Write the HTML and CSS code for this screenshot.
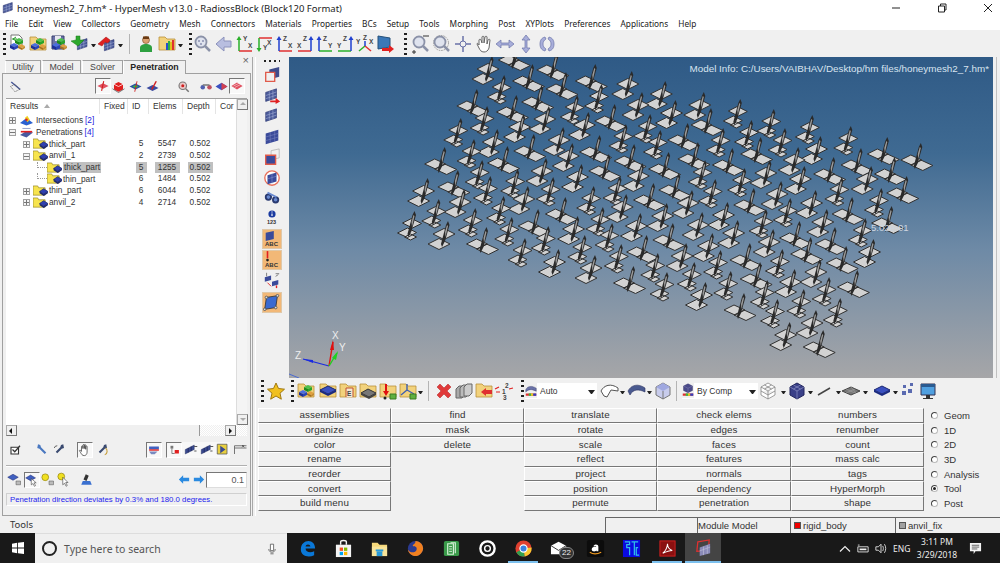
FILE: index.html
```html
<!DOCTYPE html>
<html lang="en">
<head>
<meta charset="utf-8">
<title>HyperMesh</title>
<link rel="stylesheet" href="styles.css">
</head>
<body>
<svg class="defs" aria-hidden="true">
  <defs>
    <g id="blocks"><path d="M8 6l4-2 4 2-4 2z" fill="#4cc04c"/><path d="M8 6v3l4 2V8z" fill="#1d8a1d"/><path d="M16 6v3l-4 2V8z" fill="#2aa52a"/><path d="M3 11l4-2 4 2-4 2z" fill="#4a6ee0"/><path d="M3 11v3l4 2v-3z" fill="#1b2f9a"/><path d="M11 11v3l-4 2v-3z" fill="#2a44b8"/><path d="M11 12l3-2 4 2-3 2z" fill="#e0a040"/><path d="M11 12v2l4 2v-2z" fill="#a8701e"/><path d="M18 12v2l-3 2v-2z" fill="#c48a30"/></g>
    <path id="folder" d="M2 5V3h6l2 2h8v11H2z" fill="#f2d27c" stroke="#b98f3a" stroke-width=".8"/>
    <g id="mesh"><path d="M3 6l12-4v10L3 16z" fill="#4a5a9a" stroke="#2a3470" stroke-width=".7"/><path d="M7 4.800v10M11 3.500v10M3 9.500l12-4M3 13l12-4" stroke="#aab4da" stroke-width=".6" fill="none"/></g>
    <g id="tfold"><path d="M0 3V1h5l1 2h7v8H0z" fill="#f7e44e" stroke="#8f8120" stroke-width=".7"/><path d="M7 7l4.500-3 4.500 3-4.500 3z" fill="#3040b0" stroke="#101a60" stroke-width=".7"/><path d="M7 7v2l4.500 3 4.500-3V7l-4.500 3z" fill="#1a2570"/></g>
    <g id="diam"><path d="M2 9l8-4 8 4-8 4z" fill="#3a50c0" stroke="#1a2670"/><path d="M2 9v2l8 4 8-4V9l-8 4z" fill="#1a2a80"/></g>
    <g id="mag"><circle cx="8" cy="8" r="5.500" fill="#dfe3ee" stroke="#8b92a8" stroke-width="1.800"/><path d="M12 12l5 5" stroke="#8b92a8" stroke-width="2.500"/></g>
    <g id="blade"><path d="M0 6L5 -13L7 -17L8.500 -13L4 3L1 9z" fill="#2a2a2a"/><path d="M4 -6L6 -13L7 -12L4.500 -1z" fill="#9c9c9c"/></g>
    <g id="item0"><path d="M-8 -4l11-5.500 11 5.500-11 5.500z M-13 6l11-5.500 11 5.500-11 5.500z" fill="#d2d2d2" stroke="#303030"/><use href="#blade"/></g>
    <g id="item1"><path d="M-13 0l10-5 11 5-10 5z M-3 5l10-5 12 5.500-10 5z" fill="#d2d2d2" stroke="#303030"/><use href="#blade"/></g>
    <g id="item2"><path d="M-5 -5l9-4.500 10 5-9 4.500z M-10 5l10-5 9 4.500 -9 5z M-3 9l6-3 6 3-6 3z" fill="#d2d2d2" stroke="#303030"/><use href="#blade"/></g>
  </defs>
</svg>

<div class="titlebar">
  <svg class="appicon" viewBox="0 0 20 20"><use href="#mesh"/></svg>
  <span class="title">honeymesh2_7.hm* - HyperMesh v13.0 - RadiossBlock (Block120 Format)</span>
  <div class="winctl">
    <svg viewBox="0 0 10 10"><path d="M1 5h8" stroke="#222"/></svg>
    <svg viewBox="0 0 10 10"><path d="M1.500 3h6v6h-6zM3.500 3V1h5.500v6H7.500" fill="none" stroke="#222"/></svg>
    <svg viewBox="0 0 10 10"><path d="M1 1l8 8M9 1l-8 8" stroke="#222"/></svg>
  </div>
</div>

<nav class="menubar">
  <span>File</span><span>Edit</span><span>View</span><span>Collectors</span><span>Geometry</span><span>Mesh</span><span>Connectors</span><span>Materials</span><span>Properties</span><span>BCs</span><span>Setup</span><span>Tools</span><span>Morphing</span><span>Post</span><span>XYPlots</span><span>Preferences</span><span>Applications</span><span>Help</span>
</nav>

<div class="toolbar top">
  <i class="dots"></i>
  <svg class="ic" viewBox="0 0 20 20"><path d="M4 1h8l3 3v8H4z" fill="#fff" stroke="#777"/><path d="M5 5h5M9 3l-3 2 3 2" stroke="#2a9a2a" fill="none"/><use href="#blocks"/></svg>
  <svg class="ic" viewBox="0 0 20 20"><use href="#folder"/><use href="#blocks"/></svg>
  <svg class="ic" viewBox="0 0 20 20"><path d="M3 2h12v13H3z" fill="#6a72a8" stroke="#3a4070"/><path d="M6 2h6v5H6z" fill="#e8e8f0"/><use href="#blocks"/></svg>
  <svg class="ic" viewBox="0 0 20 20"><g transform="translate(5 3) scale(.8)"><use href="#mesh"/></g><path d="M10 2v4h4L8 12 1 7l5-1V2z" fill="#2da82d" stroke="#1a7a1a" stroke-width=".5"/></svg>
  <b class="drop"></b>
  <svg class="ic" viewBox="0 0 20 20"><g transform="translate(5 4) scale(.8)"><use href="#mesh"/></g><path d="M1 10l8-7 4 3-1 2-2 1-2-1-3 4z" fill="#e02020" stroke="#a01010" stroke-width=".5"/></svg>
  <b class="drop"></b>
  <i class="sep"></i>
  <svg class="ic" viewBox="0 0 20 20"><circle cx="10" cy="6" r="3.500" fill="#d9a070" stroke="#7a4a20" stroke-width=".6"/><path d="M7 2.500h6V5H7z" fill="#6a3a12"/><path d="M4 18v-4c0-3 3-4 6-4s6 1 6 4v4z" fill="#2da040"/></svg>
  <svg class="ic" viewBox="0 0 20 20"><use href="#folder"/><path d="M9 16V9h2v7z" fill="#2a50d0"/><path d="M11 16V7h2v9z" fill="#30b040"/><path d="M13 16V8h2v8z" fill="#e0c020"/><path d="M15 16V6h2v10z" fill="#e03030"/></svg>
  <b class="drop"></b>
  <i class="dots ml5"></i>
  <svg class="ic" viewBox="0 0 20 20"><use href="#mag"/><g fill="#8a90b0"><circle cx="6" cy="7" r="1"/><circle cx="10" cy="7" r="1"/><circle cx="8" cy="10" r="1"/></g></svg>
  <svg class="ic" viewBox="0 0 20 20"><path d="M2 10l8-7v4h7v6h-7v4z" fill="#b8bee0" stroke="#8c92bc"/></svg>
  <div class="tgroup">
    <svg class="ic" viewBox="0 0 20 20"><path d="M4 17h13" stroke-width="1.500" fill="none" stroke="#e03030"/><path d="M4 17V4" stroke="#2ab02a" stroke-width="1.500"/><path d="M1.500 6L4 2l2.500 4z" fill="#2ab02a"/><text x="8" y="7" class="ax">Y</text><text x="13" y="14" class="ax">X</text></svg>
    <svg class="ic" viewBox="0 0 20 20"><path d="M4 4h13" stroke="#e03030" stroke-width="1.500"/><path d="M4 4v12" stroke="#2ab02a" stroke-width="1.500"/><path d="M1.500 14L4 18l2.500-4z" fill="#2ab02a"/><text x="8" y="16" class="ax">Y</text><text x="12" y="11" class="ax">X</text></svg>
    <svg class="ic" viewBox="0 0 20 20"><path d="M4 17h13" stroke="#e03030" stroke-width="1.500"/><path d="M4 17V4" stroke="#2040d0" stroke-width="1.500"/><path d="M1.500 6L4 2l2.500 4z" fill="#2040d0"/><text x="8" y="7" class="ax">Z</text><text x="13" y="14" class="ax">X</text></svg>
    <svg class="ic" viewBox="0 0 20 20"><path d="M3 17h13" stroke="#e03030" stroke-width="1.500"/><path d="M16 17V4" stroke="#2040d0" stroke-width="1.500"/><path d="M13.500 6L16 2l2.500 4z" fill="#2040d0"/><text x="8" y="7" class="ax">Z</text><text x="2" y="14" class="ax">X</text></svg>
    <svg class="ic" viewBox="0 0 20 20"><path d="M4 17h13" stroke="#2ab02a" stroke-width="1.500"/><path d="M4 17V4" stroke="#2040d0" stroke-width="1.500"/><path d="M1.500 6L4 2l2.500 4z" fill="#2040d0"/><text x="8" y="7" class="ax">Z</text><text x="13" y="14" class="ax">Y</text></svg>
    <svg class="ic" viewBox="0 0 20 20"><path d="M3 17h13" stroke="#2ab02a" stroke-width="1.500"/><path d="M16 17V4" stroke="#2040d0" stroke-width="1.500"/><path d="M13.500 6L16 2l2.500 4z" fill="#2040d0"/><text x="8" y="7" class="ax">Z</text><text x="2" y="14" class="ax">Y</text></svg>
    <svg class="ic" viewBox="0 0 20 20"><path d="M10 12l-6 5" stroke="#2ab02a" stroke-width="1.500"/><path d="M10 12l6 5" stroke="#e03030" stroke-width="1.500"/><path d="M10 12V7" stroke="#2040d0" stroke-width="1.500"/><text x="1" y="10" class="ax">Y</text><text x="8" y="6" class="ax">Z</text><text x="14" y="10" class="ax">X</text></svg>
    <svg class="ic" viewBox="0 0 20 20"><path d="M3 2l12 2v9l-12 2z" fill="#3a78b8" stroke="#25507a"/><path d="M7 14h7v-3l5 4-5 4v-2H7z" fill="#e02020"/></svg>
  </div>
  <i class="dots ml8"></i>
  <svg class="ic ml3" viewBox="0 0 20 20"><use href="#mag"/><path d="M12 2h6" stroke="#333"/><path d="M1 18h4M3 16v4" stroke="#333"/></svg>
  <svg class="ic" viewBox="0 0 20 20"><circle cx="9" cy="9" r="7.500" fill="none" stroke="#999" stroke-dasharray="1.500 1"/><use href="#mag"/></svg>
  <svg class="ic" viewBox="0 0 20 20"><path d="M10 2v16M2 10h16" stroke="#6a72a8" stroke-width="1.500"/><circle cx="10" cy="10" r="3" fill="#f0f0f0" stroke="#6a72a8"/></svg>
  <svg class="ic" viewBox="0 0 20 20"><path d="M5 11V6c0-1 2-1 2 0l1 3V3c0-1 2-1 2 0v6l1-6c0-1 2-1 2 0v7l1-4c.5-1 2-1 2 0l-1 8c-1 3-3 4-5 4-3 0-4-2-5-4L3 10c0-1 1-1 2 1z" fill="#fff" stroke="#666"/></svg>
  <svg class="ic" viewBox="0 0 20 20"><path d="M1 10l5-4v3h8V6l5 4-5 4v-3H6v3z" fill="#a8aeda" stroke="#6a72a8" stroke-width=".7"/></svg>
  <svg class="ic" viewBox="0 0 20 20"><path d="M10 1l4 5h-3v8h3l-4 5-4-5h3V6H6z" fill="#a8aeda" stroke="#6a72a8" stroke-width=".7"/></svg>
  <svg class="ic" viewBox="0 0 20 20"><path d="M8 3C4 4 3 7 3 10s1 6 5 7l1-2c-2-1-3-3-3-5s1-4 3-5zM12 3c4 1 5 4 5 7s-1 6-5 7l-1-2c2-1 3-3 3-5s-1-4-3-5z" fill="#a8aeda" stroke="#6a72a8" stroke-width=".7"/></svg>
</div>

<main class="main">
  <aside class="left">
    <div class="tabs">
      <span class="tab t1">Utility</span>
      <span class="tab t2">Model</span>
      <span class="tab t3">Solver</span>
      <span class="tab t4 active">Penetration</span>
      <span class="close">×</span>
    </div>
    <div class="panel">
      <div class="prow">
        <svg class="ps ml3" viewBox="0 0 20 20"><path d="M3 4l12 10" stroke="#4a5a9a" stroke-width="2"/><path d="M2 10l6-3 6 7-6 3z" fill="none" stroke="#555" stroke-dasharray="1.500 1"/></svg>
        <svg class="ps pressed ml71" viewBox="0 0 20 20"><path d="M2 10l8-4 8 4-8 4z" fill="#e05060"/><path d="M11 3l-3 14" stroke="#d02020" stroke-width="1.600"/></svg>
        <svg class="ps" viewBox="0 0 20 20"><path d="M4 7l6-3 6 3v7l-6 3-6-3z" fill="#e02020"/><path d="M4 7l6 3 6-3" stroke="#fff" fill="none"/><path d="M2 13l8 5 8-5" stroke="#555" fill="none"/></svg>
        <svg class="ps ml2" viewBox="0 0 20 20"><path d="M2 10l8-4 8 4-8 4z" fill="#2a50a0"/><path d="M6 10l4-2 4 2-4 2z" fill="#30c040"/><path d="M12 3l-3 14" stroke="#d02020" stroke-width="1.200"/></svg>
        <svg class="ps ml2" viewBox="0 0 20 20"><path d="M2 12l8-4 8 4-8 4z" fill="#3a4aa0"/><path d="M9 14l6-11" stroke="#d02020" stroke-width="2"/></svg>
        <svg class="ps ml16" viewBox="0 0 20 20"><circle cx="9" cy="9" r="5" fill="#e8c8c8" stroke="#777" stroke-width="1.500"/><circle cx="9" cy="9" r="2" fill="#d02020"/><path d="M13 13l4 4" stroke="#777" stroke-width="2"/></svg>
        <svg class="ps ml8" viewBox="0 0 20 20"><circle cx="5" cy="11" r="3" fill="#5060b0"/><circle cx="14" cy="11" r="3" fill="#c05060"/><path d="M5 8h9" stroke="#777" stroke-width="2"/></svg>
        <svg class="ps" viewBox="0 0 20 20"><path d="M2 10l8-5 8 5-8 5z" fill="#3a50c0"/><path d="M10 5l8 5-8 5z" fill="#d04050"/></svg>
        <svg class="ps pressed" viewBox="0 0 20 20"><path d="M2 10l8-5 8 5-8 5z" fill="#e05060"/><path d="M5 10l8-4M7 12l8-4" stroke="#fff" stroke-width=".7"/></svg>
      </div>

      <div class="tree">
        <div class="treeinner">
          <div class="thead">
            <span class="th">Results <em class="sort"></em></span><span class="th">Fixed</span><span class="th">ID</span><span class="th">Elems</span><span class="th">Depth</span><span class="th last">Cor</span>
          </div>
          <div class="trow"><span class="tname l0"><u class="exp"></u><svg class="ti" viewBox="0 0 16 12"><path d="M0 9l8-6 8 6-8 3z" fill="#2a60d0"/><path d="M6 3l3-3 3 5-3 3z" fill="#f0d020"/><circle cx="8" cy="5" r="1.500" fill="#e02020"/></svg>Intersections <a class="cnt">[2]</a></span></div>
          <div class="trow"><span class="tname l0"><u class="exp minus"></u><svg class="ti" viewBox="0 0 16 12"><path d="M0 9l8-5 8 2-8 6z" fill="#4a5aa0"/><path d="M1 5h14" stroke="#e02020" stroke-width="2"/><path d="M3 1h10" stroke="#7a8ac0"/></svg>Penetrations <a class="cnt">[4]</a></span></div>
          <div class="trow"><span class="tname l1"><u class="exp"></u><svg class="ti2" viewBox="0 0 16 13"><use href="#tfold"/></svg>thick_part</span><span class="c">5</span><span class="c">5547</span><span class="c">0.502</span></div>
          <div class="trow"><span class="tname l1"><u class="exp minus"></u><svg class="ti2" viewBox="0 0 16 13"><use href="#tfold"/></svg>anvil_1</span><span class="c">2</span><span class="c">2739</span><span class="c">0.502</span></div>
          <div class="trow"><span class="tname l2"><i class="branch"></i><svg class="ti2" viewBox="0 0 16 13"><use href="#tfold"/></svg><span class="sel">thick_part</span></span><span class="c"><span class="sel cs">5</span></span><span class="c"><span class="sel cs wide">1255</span></span><span class="c"><span class="sel cs wide">0.502</span></span></div>
          <div class="trow"><span class="tname l2"><i class="branch"></i><svg class="ti2" viewBox="0 0 16 13"><use href="#tfold"/></svg>thin_part</span><span class="c">6</span><span class="c">1484</span><span class="c">0.502</span></div>
          <div class="trow"><span class="tname l1"><u class="exp"></u><svg class="ti2" viewBox="0 0 16 13"><use href="#tfold"/></svg>thin_part</span><span class="c">6</span><span class="c">6044</span><span class="c">0.502</span></div>
          <div class="trow"><span class="tname l1"><u class="exp"></u><svg class="ti2" viewBox="0 0 16 13"><use href="#tfold"/></svg>anvil_2</span><span class="c">4</span><span class="c">2714</span><span class="c">0.502</span></div>
        </div>
        <div class="vscroll"><b class="sbtn up"></b><b class="sbtn down"></b></div>
        <div class="hscroll"><b class="sbtn left-a"></b><span class="hthumb"></span><b class="sbtn right-a"></b></div>
      </div>

      <div class="trow1">
        <svg class="ps ml2" viewBox="0 0 20 20"><path d="M4 7h10v9H4z" fill="#fff" stroke="#333" stroke-width="1.500"/><path d="M6 10l3 3 7-8" stroke="#333" stroke-width="1.600" fill="none"/></svg>
        <svg class="ps ml10" viewBox="0 0 20 20"><path d="M4 3l3 1 1 3 7 7-2 2-7-7-3-1z" fill="#4a78c0"/></svg>
        <svg class="ps" viewBox="0 0 20 20"><path d="M15 3l-3 1-1 3-6 6 2 2 6-6 3-1z" fill="#3a4a70"/><path d="M3 8a4 4 0 0 1 4-3" stroke="#333" fill="none"/></svg>
        <svg class="ps pressed ml8" viewBox="0 0 20 20"><path d="M5 10V5c0-1 2-1 2 0v3-5c0-1 2-1 2 0v5-5c0-1 2-1 2 0v6-4c0-1 2-1 2 0v8c0 3-2 5-4 5-3 0-4-2-5-4l-2-3c0-1 2-1 3 1z" fill="#fff" stroke="#333"/></svg>
        <svg class="ps" viewBox="0 0 20 20"><path d="M15 3l-3 1-1 3-6 6 2 2 6-6 3-1z" fill="#3a4a70"/><path d="M14 8c3 2 3 8-1 9" stroke="#c8a040" stroke-width="1.500" fill="none"/></svg>
        <svg class="ps pressed ml34" viewBox="0 0 20 20"><path d="M3 5h14v4H3z" fill="#4060c0"/><path d="M3 10h14" stroke="#e02020" stroke-width="2"/><path d="M3 12h12l-4 4H6z" fill="#7a8ac0"/></svg>
        <span class="pgroup">
          <svg class="ps pressed" viewBox="0 0 20 20"><path d="M5 4h4v4H5z" fill="#777"/><path d="M7 8v7h4" stroke="#555" fill="none"/><path d="M11 10h6v5h-6z" fill="#e02020"/></svg>
          <svg class="ps" viewBox="0 0 20 20"><path d="M3 16l4-2V8l-4 2zM7 14l4-2V6L7 8zM11 12l4-2V4l-4 2z" fill="#3a4a90" stroke="#1a2250" stroke-width=".5"/><path d="M15 6h4M15 12h3" stroke="#222"/></svg>
          <svg class="ps" viewBox="0 0 20 20"><path d="M3 16l4-2V8l-4 2zM7 14l4-2V6L7 8zM11 12l4-2V4l-4 2z" fill="#3a4a90" stroke="#1a2250" stroke-width=".5"/><path d="M15 6h4M15 12h3" stroke="#222"/></svg>
          <svg class="ps" viewBox="0 0 20 20"><path d="M3 3h13v13H3z" fill="#e8d040" stroke="#555"/><path d="M7 5l7 5-7 5z" fill="#3a4a90"/></svg>
        </span>
        <svg class="ps ml1" viewBox="0 0 20 20"><path d="M2 16V5h16M2 8h16" fill="none" stroke="#666" stroke-width="1.200"/><path d="M12 4l3 3M15 4l-3 3" stroke="#444"/></svg>
      </div>
      <hr class="rule">
      <div class="trow2">
        <svg class="ps ml1" viewBox="0 0 20 20"><path d="M1 7l7-4 7 4-7 4z" fill="#4060c0" stroke="#1a2670" stroke-width=".7"/><path d="M12 12h6v5h-6z" fill="#bbb" stroke="#555" stroke-width=".7"/></svg>
        <svg class="ps pressed ml2" viewBox="0 0 20 20"><path d="M1 7l7-4 7 4-7 4z" fill="#4060c0" stroke="#1a2670" stroke-width=".7"/><path d="M9 8v9l2.500-2 2 4 1.500-1-2-4h3z" fill="#fff" stroke="#222" stroke-width=".7"/></svg>
        <svg class="ps" viewBox="0 0 20 20"><circle cx="7" cy="7" r="4.500" fill="#f0e020" stroke="#9a8a10"/><path d="M12 12h6v5h-6z" fill="#bbb" stroke="#555" stroke-width=".7"/></svg>
        <svg class="ps ml1" viewBox="0 0 20 20"><circle cx="7" cy="6" r="4.500" fill="#f0e020" stroke="#9a8a10"/><path d="M9 7v10l2.500-2 2 4 1.500-1-2-4h3z" fill="#fff" stroke="#222" stroke-width=".7"/></svg>
        <svg class="ps ml8" viewBox="0 0 20 20"><path d="M3 17h14l-2-5H5z" fill="#3a70d0"/><path d="M9 3l4 2-3 7-4-2z" fill="#333"/></svg>
        <svg class="arrow ml84" viewBox="0 0 14 12"><path d="M1 6l5-5v3h7v4H6v3z" fill="#2a8ae0"/></svg>
        <svg class="arrow ml3" viewBox="0 0 14 12"><path d="M13 6L8 1v3H1v4h7v3z" fill="#2a8ae0"/></svg>
        <span class="num">0.1</span>
      </div>
      <div class="msg">Penetration direction deviates by 0.3% and 180.0 degrees.</div>
    </div>
  </aside>

  <section class="right">
    <div class="upper">
      <div class="sideicons">
        <i class="hdots"></i>
        <svg class="si" viewBox="0 0 20 20"><path d="M7 4l11-3v11l-11 3z" fill="#3e4c8c"/><path d="M3 7h10v10H3z" fill="#f0f0f0" stroke="#e05a4a" stroke-width="1.500"/></svg>
        <svg class="si" viewBox="0 0 20 20"><use href="#mesh"/><path d="M8 15h6v-3l5 4-5 3v-2H8z" fill="#e02020"/></svg>
        <svg class="si" viewBox="0 0 20 20"><use href="#mesh"/></svg>
        <svg class="si" viewBox="0 0 20 20"><path d="M3 6l14-4v12L3 18z" fill="#3a4a9a"/><path d="M8 4.500v12M13 3v12M3 10l14-4M3 14l14-4" stroke="#7a86c0" stroke-width=".6"/></svg>
        <svg class="si" viewBox="0 0 20 20"><path d="M9 3l9-2v10l-9 2z" fill="none" stroke="#999" stroke-width=".6"/><path d="M3 8h11v10H3z" fill="#3a4a9a" stroke="#e05a4a" stroke-width="1.500"/></svg>
        <svg class="si" viewBox="0 0 20 20"><circle cx="10" cy="10" r="8" fill="#fff" stroke="#e8705a" stroke-width="1.500"/><path d="M5 7l10-3v10L5 17z" fill="#3a4a9a"/><path d="M10 5v11M5 11l10-3" stroke="#8a96d0" stroke-width=".6"/></svg>
        <svg class="si" viewBox="0 0 20 20"><circle cx="6" cy="9" r="4" fill="#2a3a70"/><circle cx="14" cy="12" r="4" fill="#2a3a70"/><circle cx="6" cy="9" r="2" fill="#6a8ad0"/><circle cx="14" cy="12" r="2" fill="#6a8ad0"/><path d="M5 4l6 3 4 2" stroke="#6a8ad0" stroke-width="2"/></svg>
        <div class="infob"><svg class="info" viewBox="0 0 10 10"><circle cx="5" cy="5" r="4.500" fill="#1a3aa0"/><path d="M5 4.500v3M5 2v1.200" stroke="#fff" stroke-width="1.400"/></svg><span class="n123">123</span></div>
        <div class="orange"><svg class="si2" viewBox="0 0 20 12"><path d="M3 3l9-2v9l-9 2z" fill="#3a4a9a"/></svg><span class="abc">ABC</span></div>
        <div class="orange"><svg class="si2" viewBox="0 0 20 12"><path d="M5 0v8" stroke="#e02020" stroke-width="1.800"/><circle cx="5" cy="10" r="1.500" fill="#222"/></svg><span class="abc">ABC</span></div>
        <svg class="si" viewBox="0 0 20 20"><path d="M2 7l7-2v5l-7 2zM10 12l7-2v5l-7 2z" fill="#3a4a9a"/><path d="M4 2v4M14 3h4M14 6l3-2" stroke="#777"/><path d="M15 16v3" stroke="#e02020" stroke-width="1.500"/><path d="M5 13l4 4" stroke="#e02020"/></svg>
        <div class="orange tall"><svg class="si3" viewBox="0 0 20 20"><path d="M4 4l13-2-2 14-13 2z" fill="#3a6ad0" stroke="#333"/><circle cx="4" cy="4" r="1.500" fill="#ddd" stroke="#555"/><circle cx="17" cy="2" r="1.500" fill="#ddd" stroke="#555"/><circle cx="15" cy="16" r="1.500" fill="#ddd" stroke="#555"/><circle cx="2" cy="18" r="1.500" fill="#ddd" stroke="#555"/></svg></div>
      </div>
      <div class="viewport">
        <div class="modelinfo">Model Info: C:/Users/VAIBHAV/Desktop/hm files/honeymesh2_7.hm*</div>
        <svg id="scene" class="scene" viewBox="0 0 704 321"></svg>
        <span class="contour">5.02e-01</span>
        <svg class="triad" viewBox="0 0 60 50">
          <path d="M40 38L14 31" stroke="#1a2ae0" stroke-width="1.200"/><path d="M14 31l10 1 0 3z" fill="#1a2ae0"/>
          <path d="M40 38L44 14" stroke="#e01010" stroke-width="1.400"/><path d="M44 12l-3 10 4 0z" fill="#e01010"/>
          <path d="M40 38L48 25" stroke="#20d020" stroke-width="1.400"/><path d="M49 23l-6 7 4 2z" fill="#20d020"/>
          <path d="M0 46L10 50" stroke="#4a6ad0"/>
          <text x="43" y="11" class="axl">X</text><text x="50" y="23" class="axl">Y</text><text x="6" y="31" class="axl">Z</text>
        </svg>
      </div>
      <div class="edge"></div>
    </div>

    <div class="toolbar lower">
      <i class="dots"></i>
      <svg class="ic ml2" viewBox="0 0 20 20"><path d="M10 2l2.500 5.500 6 .7-4.500 4 1.300 6L10 15l-5.300 3.200 1.300-6-4.500-4 6-.7z" fill="#f0c020" stroke="#a07810"/></svg>
      <i class="dots ml5"></i>
      <svg class="ic ml2" viewBox="0 0 20 20"><use href="#folder"/><use href="#blocks"/></svg>
      <svg class="ic ml2" viewBox="0 0 20 20"><use href="#folder"/><use href="#diam"/></svg>
      <svg class="ic" viewBox="0 0 20 20"><use href="#folder"/><path d="M8 16V7h7v9" fill="#f5e8d0" stroke="#c05030"/><text x="9" y="15" class="ax">E</text></svg>
      <svg class="ic" viewBox="0 0 20 20"><use href="#folder"/><path d="M3 12l7-4 8 4-7 4z" fill="#777" stroke="#333"/><path d="M3 12v2l8 4 7-4v-2l-7 4z" fill="#444"/></svg>
      <svg class="ic" viewBox="0 0 20 20"><use href="#folder"/><path d="M8 3v9" stroke="#e01010" stroke-width="2"/><path d="M5 10l3 5 3-5z" fill="#e01010"/><circle cx="7" cy="17" r="1.500" fill="#222"/><path d="M12 13h6v5h-6z" fill="#60b040" stroke="#3a7a20"/></svg>
      <svg class="ic" viewBox="0 0 20 20"><use href="#folder"/><path d="M9 9l-6 5M9 9l7 4M9 9V3" stroke="#4060b0" stroke-width="1.400"/><path d="M12 13h6v5h-6z" fill="#60b040" stroke="#3a7a20"/></svg>
      <b class="drop"></b>
      <i class="sep"></i>
      <svg class="ic" viewBox="0 0 20 20"><path d="M3 6l3-3 4 4 4-4 3 3-4 4 4 4-3 3-4-4-4 4-3-3 4-4z" fill="#e03a3a" stroke="#b02020" stroke-width=".5"/></svg>
      <svg class="ic" viewBox="0 0 20 20"><path d="M2 8l3-3h6v9l-3 3H2z" fill="#aaa" stroke="#666"/><path d="M6 7l3-3h6v9l-3 3H6z" fill="#bbb" stroke="#666"/><path d="M10 6l3-3h5v9l-3 3h-5z" fill="#ccc" stroke="#666"/></svg>
      <svg class="ic" viewBox="0 0 20 20"><use href="#folder"/><path d="M7 11l5-4v2h6v4h-6v2z" fill="#e03030"/></svg>
      <svg class="ic" viewBox="0 0 20 20"><text x="11" y="7" class="ax">2</text><text x="8" y="13" class="ax">1</text><text x="9" y="19" class="ax">3</text><path d="M1 8l4-2M2 11h4M15 8l4-1" stroke="#e02020" stroke-width="1.200"/></svg>
      <i class="dots ml7"></i>
      <div class="combo c1"><svg class="cic" viewBox="0 0 16 18"><path d="M1 8c2-5 8-6 14-2v4c-6-3-10-3-14 1z" fill="#6a72a8" stroke="#2a3060" stroke-width=".5"/><path d="M1 13h14v3H1z" fill="#e03030"/><path d="M5 13h3v3H5z" fill="#30c040"/><path d="M8 13h3v3H8z" fill="#e0d020"/><path d="M11 13h4v3h-4z" fill="#3040c0"/></svg><span class="ctext">Auto</span><b class="drop big"></b></div>
      <svg class="ic ml3" viewBox="0 0 20 20"><path d="M1 10c3-6 10-8 17-3v3L11 9l-4 7-3-1z" fill="#fff" stroke="#555"/></svg>
      <b class="drop"></b>
      <svg class="ic ml2" viewBox="0 0 20 20"><path d="M1 10c3-6 10-8 17-3v4c-6-3-12-3-15 3z" fill="#4a5a90" stroke="#2a3060" stroke-width=".6"/></svg>
      <b class="drop"></b>
      <svg class="ic ml1" viewBox="0 0 20 20"><path d="M3 6l7-4 7 4v8l-7 4-7-4z" fill="#c8ccec" stroke="#777"/><path d="M3 6l7 4 7-4-7-4z" fill="#a0a8e0"/><path d="M10 10v8" stroke="#777"/></svg>
      <i class="sep narrow"></i>
      <div class="combo c2"><svg class="cic" viewBox="0 0 16 18"><path d="M8 0l6 3v6l-6 3-6-3V3z" fill="#4a4a8a" stroke="#2a2a60" stroke-width=".5"/><path d="M2 3l6 3 6-3M8 6v6" stroke="#9090c0" stroke-width=".5" fill="none"/><path d="M1 13h14v3H1z" fill="#e03030"/><path d="M5 13h3v3H5z" fill="#30c040"/><path d="M8 13h3v3H8z" fill="#e0d020"/><path d="M11 13h4v3h-4z" fill="#3040c0"/></svg><span class="ctext">By Comp</span><b class="drop big"></b></div>
      <svg class="ic" viewBox="0 0 20 20"><path d="M3 6l7-4 7 4v8l-7 4-7-4zM3 6l7 4 7-4M10 10v8M6.500 4l7 4M13.500 4l-7 4M3 10l7 4 7-4" fill="#fff" stroke="#777" stroke-width=".7"/></svg>
      <b class="drop ml3"></b>
      <svg class="ic ml1" viewBox="0 0 20 20"><path d="M3 6l7-4 7 4v8l-7 4-7-4z" fill="#3a4088" stroke="#20245c"/><path d="M3 6l7 4 7-4M10 10v8M6.500 4l7 4M13.500 4l-7 4" stroke="#9a9ed0" stroke-width=".6" fill="none"/></svg>
      <b class="drop ml1"></b>
      <svg class="ic ml1" viewBox="0 0 20 20"><path d="M4 14L16 7" stroke="#444" stroke-width="1.500"/></svg>
      <b class="drop ml2"></b>
      <svg class="ic" viewBox="0 0 20 20"><path d="M1 10l9-4 9 4-9 4z" fill="#777" stroke="#444"/><path d="M5 8l9 4M10 6l5 6M5 12l9-4" stroke="#aaa" stroke-width=".5"/></svg>
      <b class="drop ml2"></b>
      <svg class="ic ml4" viewBox="0 0 20 20"><use href="#diam"/></svg>
      <b class="drop ml1"></b>
      <svg class="ic" viewBox="0 0 20 20"><path d="M4 10h4v4H4zM10 8h4v4h-4zM5 4h3v3H5zM12 2h3v3h-3z" fill="#5a6ab0"/></svg>
      <svg class="ic" viewBox="0 0 20 20"><path d="M3 3h14v11H3z" fill="#50a0e0" stroke="#335"/><path d="M3 3h14v3H3z" fill="#2a5a90"/><path d="M8 14h4v3h3v1H5v-1h3z" fill="#333"/></svg>
    </div>

    <div class="pages">
      <div class="menu">
        <button>assemblies</button><button>find</button><button>translate</button><button>check elems</button><button>numbers</button>
        <button>organize</button><button>mask</button><button>rotate</button><button>edges</button><button>renumber</button>
        <button>color</button><button>delete</button><button>scale</button><button>faces</button><button>count</button>
        <button>rename</button><span class="blank"></span><button>reflect</button><button>features</button><button>mass calc</button>
        <button>reorder</button><span class="blank"></span><button>project</button><button>normals</button><button>tags</button>
        <button>convert</button><span class="blank"></span><button>position</button><button>dependency</button><button>HyperMorph</button>
        <button>build menu</button><span class="blank"></span><button>permute</button><button>penetration</button><button>shape</button>
      </div>
      <div class="radios">
        <label><i class="radio"></i>Geom</label>
        <label><i class="radio"></i>1D</label>
        <label><i class="radio"></i>2D</label>
        <label><i class="radio"></i>3D</label>
        <label><i class="radio"></i>Analysis</label>
        <label><i class="radio on"></i>Tool</label>
        <label><i class="radio"></i>Post</label>
      </div>
    </div>
  </section>
</main>

<footer class="status">
  <span class="stext">Tools</span>
  <span class="sbox s1"></span>
  <span class="sbox s2">Module Model</span>
  <span class="sbox s3"><i class="swatch red"></i>rigid_body</span>
  <span class="sbox s4"><i class="swatch gray"></i>anvil_fix</span>
</footer>

<div class="taskbar">
  <div class="start"><svg class="win" viewBox="0 0 14 14"><path d="M0 2l6-1v5.500H0zM7 1l7-1v6.500H7zM0 7.500h6V13l-6-1zM7 7.500h7V14l-7-1z" fill="#fff"/></svg></div>
  <div class="search">
    <i class="cortana"></i>
    <span class="stxt">Type here to search</span>
    <svg class="mic" viewBox="0 0 10 14"><path d="M3 1h4v8H3z" fill="#fff" stroke="#555"/><path d="M1 7c0 3 2 4 4 4s4-1 4-4M3 13h4" fill="none" stroke="#555"/></svg>
  </div>
  <div class="apps">
    <span class="app"><svg viewBox="0 0 20 20"><path d="M3 11c0-6 4-9 8-9s7 3 7 8H8c0 4 5 5 9 3v4c-6 3-14 1-14-6z" fill="#0a78d8"/><path d="M8 8h5c0-3-5-3-5 0z" fill="#1b1b1b"/></svg></span>
    <span class="app"><svg viewBox="0 0 20 20"><path d="M2 6h16v13H2z" fill="#f4f4f4"/><path d="M7 6V3c0-2 6-2 6 0v3" fill="none" stroke="#f4f4f4" stroke-width="1.500"/><path d="M6 9h3.500v3.500H6z" fill="#f25022"/><path d="M10.500 9H14v3.500h-3.500z" fill="#7fba00"/><path d="M6 13.500h3.500V17H6z" fill="#00a4ef"/><path d="M10.500 13.500H14V17h-3.500z" fill="#ffb900"/></svg></span>
    <span class="app"><svg viewBox="0 0 20 20"><path d="M2 4h6l2 2h8v12H2z" fill="#f5d87a"/><path d="M2 8h16v10H2z" fill="#f8e49a"/><path d="M7 13h6v5H7z" fill="#2a9ad8"/><path d="M6 13h8v-2H6z" fill="#2a9ad8"/></svg></span>
    <span class="app"><svg viewBox="0 0 20 20"><circle cx="10" cy="10" r="8" fill="#2a3a90"/><path d="M10 2c5 0 8 4 8 8s-4 8-8 8-8-4-8-7c1 2 3 3 5 3 3 0 5-2 4-5-1-2-3-1-4-2 1-2 3-2 3-5z" fill="#f08020"/></svg></span>
    <span class="app"><svg viewBox="0 0 20 20"><rect x="2" y="2" width="16" height="16" rx="2" fill="#3a9a4a"/><path d="M6 5h6v11H6z" fill="none" stroke="#d8f0d8" stroke-width="1.200"/><path d="M9 4h5v11" fill="none" stroke="#d8f0d8" stroke-width="1.200"/><path d="M7.500 8h3M7.500 10.500h3M7.500 13h3" stroke="#d8f0d8"/></svg></span>
    <span class="app"><svg viewBox="0 0 20 20"><circle cx="10" cy="10" r="7.500" fill="none" stroke="#fff" stroke-width="2.500"/><circle cx="10" cy="10" r="3" fill="none" stroke="#fff" stroke-width="1.500"/></svg></span>
    <span class="app underline"><svg viewBox="0 0 20 20"><circle cx="10" cy="10" r="8.500" fill="#e04030"/><path d="M10 10L2.500 14a8.500 8.500 0 0 0 9 4.300z" fill="#30a050"/><path d="M10 10l8.500-1a8.500 8.500 0 0 1-7 9.300z" fill="#f8c830"/><circle cx="10" cy="10" r="3.800" fill="#3a80e0" stroke="#fff" stroke-width="1.200"/></svg></span>
    <span class="app mail"><svg viewBox="0 0 20 20"><path d="M1 7l8-4 8 4v9H1z" fill="#fff"/><path d="M1 7l8 5 8-5" fill="none" stroke="#333"/></svg><em class="badge">22</em></span>
    <span class="app"><svg viewBox="0 0 20 20"><rect x="1" y="1" width="18" height="18" rx="2" fill="#0c0c0c"/><path d="M8 7c2-2 5-1 5 1v5h-2v-1c-2 2-5 1-5-1s2-3 5-3V8c0-1-2-1-3 0z" fill="#fff"/><path d="M4 14c3 2 8 2 12 0" stroke="#f09a20" fill="none" stroke-width="1.200"/></svg></span>
    <span class="app"><svg viewBox="0 0 20 20"><rect x="1" y="1" width="18" height="18" fill="#0a0ae0"/><path d="M3 3h5v3H5v3h3v8M10 3h7M13 3v14M17 9h-2v8h3" fill="none" stroke="#30c0e8" stroke-width="1.300"/></svg></span>
    <span class="app underline"><svg viewBox="0 0 20 20"><rect x="2" y="2" width="16" height="16" fill="#8a1010" stroke="#d02020"/><path d="M5 15c3-2 5-7 5-10 0 4 2 6 5 7-3 0-6 1-10 3z" fill="none" stroke="#fff" stroke-width="1.100"/></svg></span>
    <span class="app active underline"><svg viewBox="0 0 20 20"><path d="M4 3l12-2-1 11-12 1z" fill="none" stroke="#e03030" stroke-width="1.300"/><path d="M6 9l11-4v10L6 18z" fill="#8a8ab8"/><path d="M10 8v9M14 6.500v9M6 12.500l11-4" stroke="#c4c4dc" stroke-width=".6"/></svg></span>
  </div>
  <div class="tray">
    <svg class="tr chev" viewBox="0 0 12 8"><path d="M1 7l5-5 5 5" fill="none" stroke="#eee" stroke-width="1.200"/></svg>
    <svg class="tr" viewBox="0 0 14 12"><path d="M1 2h2M1 4h12v6H1z" fill="none" stroke="#eee"/><path d="M3 6h8v2H3z" fill="#eee"/></svg>
    <svg class="tr" viewBox="0 0 14 12"><path d="M1 4h3l3-3v10L4 8H1z" fill="none" stroke="#eee"/><path d="M9 3c1 2 1 4 0 6M11 1c2 3 2 7 0 10" fill="none" stroke="#eee"/></svg>
    <span class="eng">ENG</span>
    <span class="clock"><span>3:11 PM</span><span>3/29/2018</span></span>
    <svg class="tr note" viewBox="0 0 14 14"><path d="M1 1h12v9H7l-2 3v-3H1z" fill="#f4f4f4"/><path d="M3 3.500h8M3 5.500h8M3 7.500h6" stroke="#1a1a1a" stroke-width=".7"/></svg>
  </div>
</div>
<script src="scene.js"></script>
</body>
</html>
```

FILE: styles.css
```css
* { box-sizing: border-box; }
html, body { margin: 0; padding: 0; }
body {
  width: 1000px; height: 563px; overflow: hidden;
  font-family: "Liberation Sans", Arial, sans-serif;
  background: #f0f0f0; color: #333;
  display: flex; flex-direction: column;
}
.defs { width: 0; height: 0; position: absolute; }
i, b, u, em { display: inline-block; font-style: normal; }

.titlebar { height: 17px; flex: none; background: #fff; display: flex; align-items: center; padding-left: 1px; position: relative; }
.appicon { width: 15px; height: 15px; }
.title { font: 9.500px "Noto Sans", sans-serif; margin-left: 1px; color: #222; }
.winctl { position: absolute; right: 7px; top: 3px; display: flex; gap: 36px; }
.winctl svg { width: 10px; height: 10px; }

.menubar { height: 13px; flex: none; background: #fff; display: flex; gap: 10.100px; padding-left: 5px; font: 8.300px "Noto Sans", sans-serif; line-height: 13px; color: #222; white-space: nowrap; }

.toolbar { display: flex; align-items: center; background: #f0f0f0; flex: none; }
.toolbar.top { height: 27px; padding-left: 3px; gap: 1px; }
.tgroup { display: flex; }
.toolbar.lower { height: 25px; padding-left: 3px; gap: 0; }
.ic { width: 20px; height: 20px; flex: none; }
.ax { font: bold 6.500px "Liberation Sans", sans-serif; fill: #444; }
.dots { width: 3px; height: 22px; flex: none; background: repeating-linear-gradient(#222 0 2px, transparent 2px 5px); }
.drop { width: 5px; flex: none; height: 0; border-left: 2.500px solid transparent; border-right: 2.500px solid transparent; border-top: 3px solid #222; margin-top: 3px; }
.drop.big { width: 7px; border-left-width: 3.500px; border-right-width: 3.500px; border-top-width: 4px; }
.sep { width: 1px; height: 20px; background: #b4b4b4; margin: 0 5px 0 5px; flex: none; }
.sep.narrow { margin: 0 4px 0 3px; }
.ml1 { margin-left: 1px; } .ml2 { margin-left: 2px; } .ml3 { margin-left: 3px; } .ml4 { margin-left: 4px; } .ml5 { margin-left: 5px; }
.ml7 { margin-left: 7px; } .ml8 { margin-left: 8px; } .ml10 { margin-left: 10px; } .ml16 { margin-left: 16px; }
.ml34 { margin-left: 34px; } .ml71 { margin-left: 71px; } .ml84 { margin-left: 84px; }

.main { flex: none; height: 459px; display: flex; }

.left { width: 258px; flex: none; padding-left: 2px; position: relative; }
.left::after { content: ""; position: absolute; right: 2px; top: 0; bottom: 0; width: 2px; border-left: 1px solid #a8a8a8; border-right: 1px solid #fff; }
.tabs { height: 16px; padding: 3px 0 0 3px; display: flex; position: relative; font-size: 8.800px; }
.tab { height: 13px; line-height: 13px; text-align: center; background: #f0f0f0; border: 1px solid #a0a0a0; border-bottom: 0; border-left-color: #fff; color: #444; }
.t1 { width: 36px; } .t2 { width: 39px; margin-left: 1px; } .t3 { width: 41px; margin-left: 1px; } .t4 { width: 63px; }
.tab.active { font-weight: bold; color: #222; background: #f0f0f0; position: relative; z-index: 1; margin-bottom: -1px; height: 14px; }
.close { position: absolute; right: 9px; top: -2px; font-size: 11px; color: #666; line-height: 11px; }
.panel { width: 249px; height: 443px; border: 1px solid #a0a0a0; background: #f0f0f0; padding: 0 3px; display: flex; flex-direction: column; }
.prow { height: 24px; flex: none; display: flex; align-items: center; }
.ps { width: 15px; height: 15px; flex: none; }
.ps.pressed { border: 1px solid #777; border-right-color: #fff; border-bottom-color: #fff; background: #f8f8f8; width: 16px; height: 16px; }

.tree { height: 338px; flex: none; background: #fff; border-top: 1px solid #a0a0a0; position: relative; display: flex; flex-direction: column; font-size: 8.300px; line-height: 11.700px; }
.treeinner { flex: 1; width: 230px; overflow: hidden; }
.thead { display: grid; grid-template-columns: 94px 28px 21px 34px 33px 20px; height: 15px; margin-bottom: 1px; line-height: 15px; font-size: 8.500px; }
.th { padding-left: 4px; border-right: 1px solid #e4e4e4; white-space: nowrap; overflow: hidden; }
.th.last { border: 0; }
.sort { width: 0; height: 0; border-left: 3px solid transparent; border-right: 3px solid transparent; border-bottom: 4px solid #aaa; margin-left: 3px; vertical-align: 1px; }
.trow { display: grid; grid-template-columns: 124px 22px 30px 36px; height: 11.700px; }
.tname { display: flex; align-items: center; white-space: nowrap; }
.tname.l0 { padding-left: 3px; } .tname.l1 { padding-left: 17px; } .tname.l2 { padding-left: 41px; }
.exp { width: 7px; height: 7px; border: 1px solid #a0a0a0; margin-right: 3px; position: relative; flex: none; background: linear-gradient(#777,#777) center/5px 1px no-repeat, linear-gradient(#777,#777) center/1px 5px no-repeat, #f4f4f4; }
.exp.minus { background: linear-gradient(#777,#777) center/5px 1px no-repeat, #f4f4f4; }
.branch { width: 10px; height: 6px; border-left: 1px dotted #999; border-bottom: 1px dotted #999; flex: none; margin-top: -6px; margin-left: -10px; }
.ti { width: 13px; height: 11px; margin-right: 3px; flex: none; margin-left: 1px; }
.ti2 { width: 15px; height: 12px; margin-right: 1px; flex: none; }
.cnt { color: #2222dd; margin-left: 2px; }
.c { text-align: center; }
.sel { background: #c0c0c0; padding: 0 1px; display: inline-block; line-height: 11px; }
.cs { width: 11px; }
.cs.wide { width: 25px; }
.vscroll { position: absolute; right: 0; top: 0; width: 11px; bottom: 11px; background: #f4f4f4; border-left: 1px solid #ddd; display: flex; flex-direction: column; justify-content: space-between; }
.hscroll { height: 11px; flex: none; display: flex; background: repeating-conic-gradient(#f0f0f0 0 25%, #fff 0 50%) 0 0/2px 2px; }
.sbtn { width: 11px; height: 11px; background: #f0f0f0; border: 1px solid #aaa; border-right-color: #777; border-bottom-color: #777; position: relative; flex: none; }
.sbtn::after { content: ""; position: absolute; left: 2px; top: 2px; border: 3px solid transparent; }
.sbtn.up::after { border-bottom-color: #aaa; top: -1px; }
.sbtn.down::after { border-top-color: #aaa; top: 3px; }
.sbtn.left-a::after { border-right-color: #111; left: -1px; }
.sbtn.right-a::after { border-left-color: #111; left: 3px; }
.hthumb { width: 183px; background: #f0f0f0; border-right: 1px solid #999; }
.hscroll .right-a { margin-left: auto; margin-right: 11px; }

.trow1 { height: 27px; flex: none; display: flex; align-items: center; gap: 2px; }
.trow1 .pgroup { margin-left: 2px; }
.pgroup { display: flex; gap: 1px; background: #f8f8f8; }
.rule { width: 100%; height: 2px; margin: 2px 0 0; border: 0; border-top: 1px solid #b0b0b0; border-bottom: 1px solid #fff; flex: none; }
.trow2 { height: 25px; flex: none; display: flex; align-items: center; }
.arrow { width: 12px; height: 11px; flex: none; }
.num { width: 41px; height: 16px; margin-left: 1px; flex: none; background: #fff; border: 1px solid #777; border-right-color: #ddd; border-bottom-color: #ddd; text-align: right; padding-right: 2px; font-size: 9px; line-height: 14px; color: #555; }
.msg { height: 13px; margin-top: 1px; border: 1px solid #d0d0d0; border-right-color: #fff; border-bottom-color: #fff; font-size: 7.800px; line-height: 11px; color: #2222ee; padding-left: 3px; white-space: nowrap; flex: none; }

.right { flex: 1; display: flex; flex-direction: column; min-width: 0; }
.upper { height: 321px; display: flex; flex: none; }
.sideicons { width: 31px; flex: none; display: flex; flex-direction: column; align-items: center; padding-right: 4px; }
.hdots { width: 16px; height: 2px; margin-top: 3px; margin-bottom: 4px; background: repeating-linear-gradient(90deg, #222 0 2px, transparent 2px 5px); flex: none; }
.si { width: 18px; height: 18px; flex: none; margin-bottom: 2.500px; }
.infob { display: flex; flex-direction: column; align-items: center; height: 19px; flex: none; }
.info { width: 8px; height: 8px; }
.n123 { font: bold 5.500px "Liberation Sans", sans-serif; line-height: 8px; color: #333; }
.orange { width: 20px; height: 20px; flex: none; background: #f2b877; border: 1px solid #e0c8a8; margin-bottom: 1px; display: flex; flex-direction: column; align-items: center; overflow: hidden; }
.orange.tall { height: 21px; margin-top: 1px; }
.si2 { width: 18px; height: 11px; flex: none; }
.si3 { width: 17px; height: 17px; margin-top: 1px; flex: none; }
.abc { font: bold 6px "Liberation Sans", sans-serif; line-height: 7px; color: #333; }
.viewport { width: 704px; height: 321px; flex: none; position: relative; background: linear-gradient(#2f5a86 0%, #3f6a92 30%, #6e8aa6 60%, #a6a6a8 100%); overflow: hidden; }
.edge { flex: 1; border-right: 1px solid #c0c0c0; margin-right: 3px; }
.scene { position: absolute; left: 0; top: 0; width: 704px; height: 321px; }
.modelinfo { position: absolute; right: 4px; top: 6px; font-size: 9.850px; color: #d8e4f0; z-index: 2; }
.contour { position: absolute; left: 582px; top: 165px; font-size: 9.500px; color: #cdd6e0; }
.triad { position: absolute; left: 0; top: 271px; width: 60px; height: 50px; }
.axl { font: 10px "Liberation Sans", sans-serif; fill: #eee; }

.combo { display: flex; align-items: center; height: 16px; background: #fff; position: relative; flex: none; font-size: 8.500px; color: #333; }
.c1 { width: 72px; margin-left: 1px; }
.c2 { width: 76px; margin-left: 1px; }
.cic { width: 12px; height: 15px; flex: none; margin-right: 3px; background: #f0f0f0; }
.ctext { flex: 1; }
.combo .drop { margin-right: 2px; }

.pages { flex: 1; display: flex; padding-top: 5px; }
.menu { width: 666px; height: 103px; flex: none; display: grid; grid-template-columns: 133px 133px 133px 134px 133px; grid-auto-rows: 14.700px; }
.menu button { font: 9.800px "Liberation Sans", sans-serif; letter-spacing: .1px; color: #333; background: #f0f0f0; border: 0; border-top: 1px solid #fff; border-left: 1px solid #fff; border-right: 1px solid #777; border-bottom: 1px solid #777; padding: 0; line-height: 12px; }
.blank { background: #f0f0f0; }
.radios { padding-left: 7px; display: grid; grid-auto-rows: 14.700px; font-size: 9.500px; color: #333; }
.radios label { display: flex; align-items: center; }
.radio { width: 7px; height: 7px; border-radius: 50%; border: 1px solid #bbb; border-top-color: #444; border-left-color: #444; background: #fff; margin-right: 6px; position: relative; }
.radio.on::after { content: ""; position: absolute; left: 1px; top: 1px; width: 3px; height: 3px; border-radius: 50%; background: #222; }

.status { height: 17px; flex: none; display: flex; align-items: flex-end; font-size: 10px; background: #f0f0f0; padding-left: 10px; position: relative; }
.stext { width: 595px; line-height: 17px; font-family: "Noto Sans", sans-serif; font-size: 9.500px; }
.sbox { height: 16px; border-top: 1px solid #666; border-left: 1px solid #666; line-height: 15px; white-space: nowrap; font-size: 9.500px; color: #333; display: flex; align-items: center; }
.s1 { width: 92px; } .s2 { width: 93px; } .s3 { width: 105px; padding-left: 3px; } .s4 { width: 105px; padding-left: 3px; }
.swatch { width: 7px; height: 7px; margin-right: 2px; border: 1px solid #555; flex: none; }
.swatch.red { background: #f00000; } .swatch.gray { background: #a0a0a0; }

.taskbar { height: 30px; flex: none; background: #191919; display: flex; color: #eee; }
.start { width: 35px; display: flex; align-items: center; justify-content: center; flex: none; }
.win { width: 12px; height: 12px; }
.search { width: 252px; flex: none; background: #f0f0f0; display: flex; align-items: center; border-top: 1px solid #ddd; padding-left: 7px; color: #555; }
.cortana { width: 15px; height: 15px; border-radius: 50%; border: 2.500px solid #222; flex: none; }
.stxt { font: 10.500px "Noto Sans", sans-serif; margin-left: 7px; flex: 1; }
.mic { width: 8px; height: 12px; margin-right: 11px; }
.apps { display: flex; padding-left: 2px; flex: none; }
.app { width: 36px; height: 30px; display: flex; align-items: center; justify-content: center; position: relative; }
.app svg { width: 19px; height: 19px; }
.app.active { background: #444; }
.app.underline::after { content: ""; position: absolute; left: 3px; right: 3px; bottom: 0; height: 2px; background: #7cc0ee; }
.app.active.underline::after { left: 0; right: 0; }
.badge { position: absolute; left: 18px; top: 14px; width: 15px; height: 12px; border-radius: 6px; border: 1px solid #888; background: #333; font-size: 8px; line-height: 10px; text-align: center; color: #eee; }
.tray { flex: 1; display: flex; align-items: center; padding-left: 118px; }
.tr { width: 12px; height: 11px; margin-right: 6px; flex: none; }
.eng { font: 8.500px "Noto Sans", sans-serif; width: 20px; white-space: nowrap; }
.clock { display: flex; flex-direction: column; align-items: center; font: 8.500px "Noto Sans", sans-serif; line-height: 13px; width: 48px; }
.note { margin-left: 8px; width: 13px; height: 13px; }
```

FILE: scene.js
```js
// Places the stiffener parts of the honeycomb model on a skewed lattice.
var NS = "http://www.w3.org/2000/svg";
var scene = document.getElementById("scene");
var items = [];
for (var q = -1; q <= 12; q++) {
  for (var p = -6; p <= 13; p++) {
    var insideLeft = p + q / 2 >= -0.1;
    var insideRight = p + q / 2 <= 11.6;
    var insideBottom = q <= 10.1 + (p + 5) / 11;
    var insideTop = q >= -1 && !(q === -1 && p < 1);
    if (!(insideLeft && insideRight && insideBottom && insideTop)) continue;
    var h = (p * 131 + q * 17 + p * q * 7 + 1000) % 97;
    items.push({
      x: 198 + 36.5 * p + 10.2 * q + (h % 5) - 2,
      y: 16 + 9 * p + 20 * q + ((h >> 2) % 5) - 2,
      v: h % 3
    });
  }
}
items.sort(function (a, b) { return a.y - b.y; });
items.forEach(function (it) {
  var u = document.createElementNS(NS, "use");
  u.setAttribute("href", "#item" + it.v);
  u.setAttribute("x", it.x.toFixed(1));
  u.setAttribute("y", it.y.toFixed(1));
  scene.appendChild(u);
});
```
